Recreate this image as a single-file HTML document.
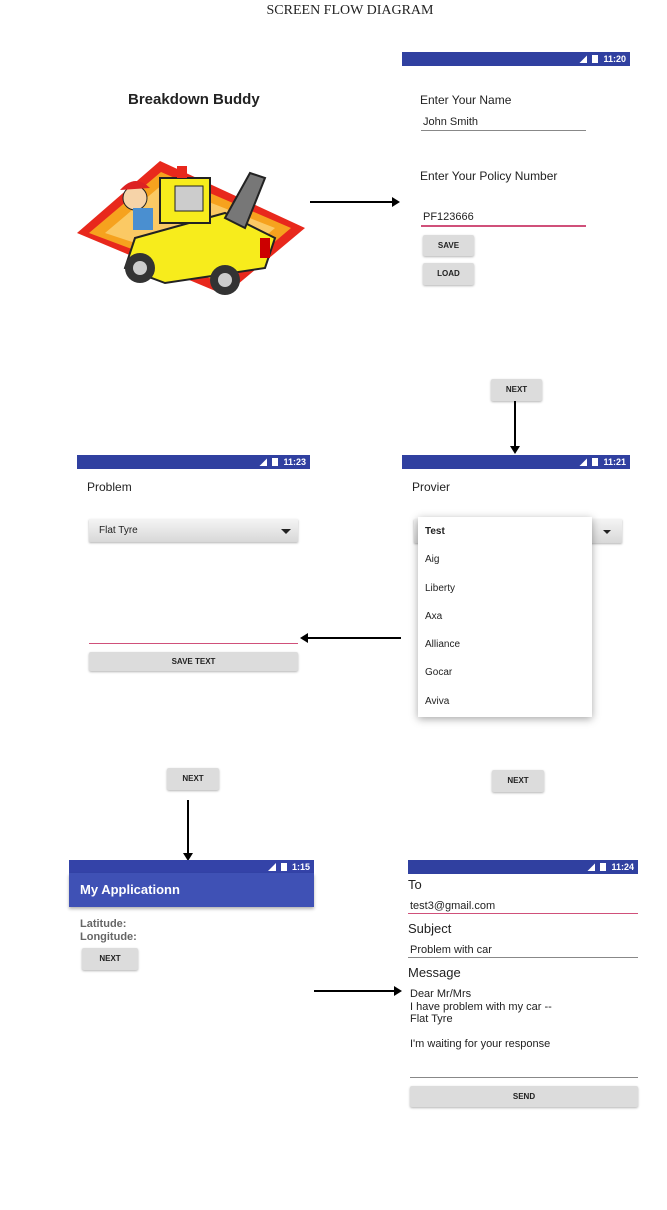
<!DOCTYPE html>
<html><head><meta charset="utf-8"><style>
*{margin:0;padding:0;box-sizing:border-box}
body{width:667px;height:1210px;background:#fff;position:relative;font-family:"Liberation Sans",sans-serif;color:#222;overflow:hidden}
.a{position:absolute;white-space:nowrap}
.sb{position:absolute;background:#3040a0;height:14px;color:#fff;font-size:9px;font-weight:bold;text-align:right;padding-right:4px;line-height:14px}
.sb i{display:inline-block;width:8px;height:8px;background:#fff;margin-right:5px;vertical-align:-1px;font-style:normal}
.sb i.s{clip-path:polygon(100% 0,100% 100%,0 100%)}
.sb i.b{width:6px}
.btn{position:absolute;background:#dcdcdc;border-radius:2px;box-shadow:0 1px 2px rgba(0,0,0,.3);font-size:8px;font-weight:bold;text-align:center;color:#222}
.ln{position:absolute;height:1px;background:#888}
.pk{background:#d0507a}
.arr{position:absolute;background:#000}
.t{font-size:12px}
</style></head><body>
<div class="a" style="left:0;width:700px;text-align:center;top:3px;font-family:'Liberation Serif',serif;font-size:14px;">SCREEN FLOW DIAGRAM</div>
<div class="a" style="left:128px;top:91px;font-size:15px;font-weight:bold">Breakdown Buddy</div>

<svg class="a" style="left:75px;top:158px" width="236" height="140" viewBox="0 0 236 140">
<polygon points="2,75 85,3 230,70 150,137" fill="#e8281c"/>
<polygon points="14,75 86,14 216,70 150,126" fill="#f6a21e"/>
<polygon points="30,75 88,26 200,70 148,114" fill="#fbc964"/>
<polygon points="60,80 150,55 200,80 190,110 90,125 50,110" fill="#f7ec1c" stroke="#222" stroke-width="2"/>
<rect x="85" y="20" width="50" height="45" fill="#f7ec1c" stroke="#222" stroke-width="2"/>
<rect x="100" y="28" width="28" height="25" fill="#ccc" stroke="#222"/>
<rect x="102" y="8" width="10" height="12" fill="#e8281c"/>
<polygon points="150,60 175,15 190,20 170,70" fill="#777" stroke="#222" stroke-width="2"/>
<circle cx="65" cy="110" r="15" fill="#333"/><circle cx="65" cy="110" r="7" fill="#ccc"/>
<circle cx="150" cy="122" r="15" fill="#333"/><circle cx="150" cy="122" r="7" fill="#ccc"/>
<rect x="185" y="80" width="10" height="20" fill="#c00"/>
<circle cx="60" cy="40" r="12" fill="#f6d3a8" stroke="#222"/>
<path d="M45 32 Q60 15 75 30 Z" fill="#d22"/>
<rect x="58" y="50" width="20" height="22" fill="#4a8fd0"/>
</svg>
<div class="arr" style="left:310px;top:201px;width:88px;height:2px"></div>
<div class="a" style="left:392px;top:197px;border-left:8px solid #000;border-top:5px solid transparent;border-bottom:5px solid transparent"></div>

<!-- screen 1 -->
<div class="sb" style="left:402px;top:52px;width:228px"><i class="s"></i><i class="b"></i>11:20</div>
<div class="a t" style="left:420px;top:93px">Enter Your Name</div>
<div class="a" style="left:423px;top:116px;font-size:11px">John Smith</div>
<div class="ln" style="left:421px;top:130px;width:165px"></div>
<div class="a t" style="left:420px;top:169px">Enter Your Policy Number</div>
<div class="a" style="left:423px;top:211px;font-size:11px">PF123666</div>
<div class="ln pk" style="left:421px;top:225px;width:165px;height:2px"></div>
<div class="btn" style="left:423px;top:235px;width:51px;height:21px;line-height:21px">SAVE</div>
<div class="btn" style="left:423px;top:263px;width:51px;height:22px;line-height:22px">LOAD</div>
<div class="btn" style="left:491px;top:379px;width:51px;height:22px;line-height:22px">NEXT</div>
<div class="arr" style="left:514px;top:401px;width:2px;height:48px"></div>
<div class="a" style="left:510px;top:446px;border-top:8px solid #000;border-left:5px solid transparent;border-right:5px solid transparent"></div>

<!-- screen 2 -->
<div class="sb" style="left:402px;top:455px;width:228px"><i class="s"></i><i class="b"></i>11:21</div>
<div class="a t" style="left:412px;top:480px">Provier</div>
<div class="a" style="left:414px;top:519px;width:208px;height:24px;background:linear-gradient(#f4f4f4,#d8d8d8);box-shadow:0 1px 2px rgba(0,0,0,.3)"></div>
<div class="a" style="left:603px;top:530px;border-top:4px solid #222;border-left:4px solid transparent;border-right:4px solid transparent"></div>
<div class="a" style="left:418px;top:517px;width:174px;height:200px;background:#fff;box-shadow:0 2px 8px rgba(0,0,0,.35);font-size:10px;line-height:28.3px;padding-left:7px;padding-top:1px">
<div style="font-weight:bold">Test</div><div>Aig</div><div>Liberty</div><div>Axa</div><div>Alliance</div><div>Gocar</div><div>Aviva</div></div>
<div class="btn" style="left:492px;top:770px;width:52px;height:22px;line-height:22px">NEXT</div>
<div class="arr" style="left:308px;top:637px;width:93px;height:2px"></div>
<div class="a" style="left:300px;top:633px;border-right:8px solid #000;border-top:5px solid transparent;border-bottom:5px solid transparent"></div>

<!-- screen 3 -->
<div class="sb" style="left:77px;top:455px;width:233px"><i class="s"></i><i class="b"></i>11:23</div>
<div class="a t" style="left:87px;top:480px">Problem</div>
<div class="a" style="left:89px;top:519px;width:209px;height:23px;background:linear-gradient(#f4f4f4,#d8d8d8);box-shadow:0 1px 2px rgba(0,0,0,.3);font-size:10px;line-height:23px;padding-left:10px">Flat Tyre</div>
<div class="a" style="left:281px;top:529px;border-top:5px solid #222;border-left:5px solid transparent;border-right:5px solid transparent"></div>
<div class="ln pk" style="left:89px;top:643px;width:209px"></div>
<div class="btn" style="left:89px;top:652px;width:209px;height:19px;line-height:19px">SAVE TEXT</div>
<div class="btn" style="left:167px;top:768px;width:52px;height:22px;line-height:22px">NEXT</div>
<div class="arr" style="left:187px;top:800px;width:2px;height:55px"></div>
<div class="a" style="left:183px;top:853px;border-top:8px solid #000;border-left:5px solid transparent;border-right:5px solid transparent"></div>

<!-- screen 4 -->
<div class="sb" style="left:69px;top:860px;width:245px;background:#3443a8"><i class="s"></i><i class="b"></i>1:15</div>
<div class="a" style="left:69px;top:873px;width:245px;height:34px;background:#3f51b5;box-shadow:0 2px 3px rgba(0,0,0,.3);color:#fff;font-size:13px;font-weight:bold;line-height:34px;padding-left:11px">My Applicationn</div>
<div class="a" style="left:80px;top:918px;font-size:11px;color:#666;font-weight:bold;line-height:13px">Latitude:<br>Longitude:</div>
<div class="btn" style="left:82px;top:948px;width:56px;height:22px;line-height:22px">NEXT</div>
<div class="arr" style="left:314px;top:990px;width:82px;height:2px"></div>
<div class="a" style="left:394px;top:986px;border-left:8px solid #000;border-top:5px solid transparent;border-bottom:5px solid transparent"></div>

<!-- screen 5 -->
<div class="sb" style="left:408px;top:860px;width:230px"><i class="s"></i><i class="b"></i>11:24</div>
<div class="a" style="left:408px;top:877px;font-size:13px">To</div>
<div class="a" style="left:410px;top:900px;font-size:11px">test3@gmail.com</div>
<div class="ln pk" style="left:408px;top:913px;width:230px"></div>
<div class="a" style="left:408px;top:921px;font-size:13px">Subject</div>
<div class="a" style="left:410px;top:944px;font-size:11px">Problem with car</div>
<div class="ln" style="left:408px;top:957px;width:230px"></div>
<div class="a" style="left:408px;top:965px;font-size:13px">Message</div>
<div class="a" style="left:410px;top:988px;font-size:11px;line-height:12.5px">Dear Mr/Mrs<br>I have problem with my car --<br>Flat Tyre<br><br>I'm waiting for your response</div>
<div class="ln" style="left:410px;top:1077px;width:228px"></div>
<div class="btn" style="left:410px;top:1086px;width:228px;height:21px;line-height:21px">SEND</div>
</body></html>
